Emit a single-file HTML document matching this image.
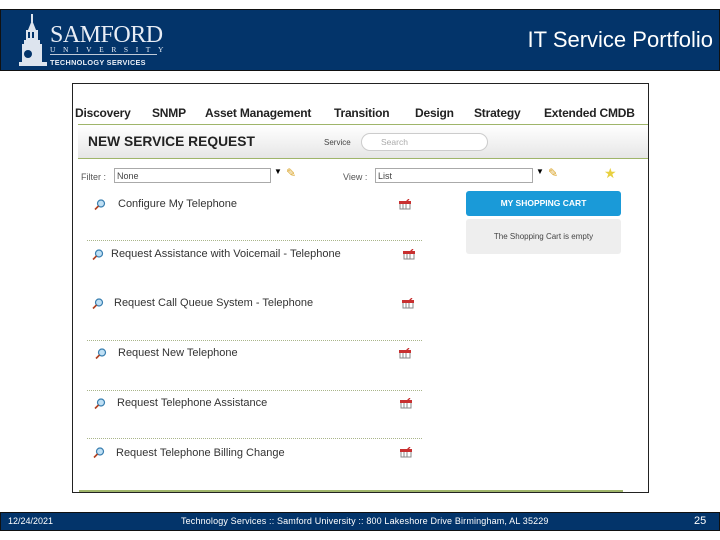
<!DOCTYPE html>
<html><head><meta charset="utf-8"><style>
*{margin:0;padding:0;box-sizing:border-box}
body{width:720px;height:540px;background:#fff;position:relative;overflow:hidden;font-family:"Liberation Sans",sans-serif}
.a{position:absolute}
.hdr{left:0;top:9px;width:720px;height:62px;background:#03346a;border:1px solid #111}
.ftr{left:0;top:512px;width:720px;height:19px;background:#03346a;border:1px solid #111;color:#fff;font-size:9px}
.frame{left:72px;top:83px;width:577px;height:410px;border:1px solid #222;background:#fff}
.nav{font-size:12px;font-weight:bold;color:#222;top:106px;letter-spacing:-0.2px}
.row{font-size:11px;color:#333;left:0}
.sep{left:87px;width:335px;border-top:1px dotted #a9b58a}
</style></head><body>
<div class="a hdr"></div>
<svg class="a" style="left:16px;top:14px" width="34" height="54" viewBox="0 0 34 54">
<g fill="#dde4ee"><rect x="15" y="0" width="2" height="8"/><polygon points="12,16 16,6 20,16"/><rect x="10" y="16" width="12" height="10"/><rect x="8" y="26" width="16" height="4"/><rect x="6" y="30" width="20" height="20"/><rect x="3" y="48" width="28" height="4"/></g>
<g fill="#03346a"><rect x="12" y="18" width="2" height="6"/><rect x="16" y="18" width="2" height="6"/><circle cx="12" cy="40" r="4"/></g></svg>
<div class="a" style="left:50px;top:23px;color:#e8edf5;font-family:'Liberation Serif',serif;font-size:24px;letter-spacing:-0.5px;line-height:24px">SAMFORD</div>
<div class="a" style="left:50px;top:45px;width:107px;color:#e8edf5;font-family:'Liberation Serif',serif;font-size:7.5px;letter-spacing:7.6px;line-height:9px;border-bottom:1px solid #c0cad8">UNIVERSITY</div>
<div class="a" style="left:50px;top:58px;color:#e8edf5;font-size:7.3px;letter-spacing:0.3px;font-weight:bold">TECHNOLOGY SERVICES</div>
<div class="a" style="right:7px;top:27px;color:#fff;font-size:22px">IT Service Portfolio</div>

<div class="a frame"></div>
<div class="a nav" style="left:75px">Discovery</div>
<div class="a nav" style="left:152px">SNMP</div>
<div class="a nav" style="left:205px">Asset Management</div>
<div class="a nav" style="left:334px">Transition</div>
<div class="a nav" style="left:415px">Design</div>
<div class="a nav" style="left:474px">Strategy</div>
<div class="a nav" style="left:544px">Extended CMDB</div>
<div class="a" style="left:78px;top:124px;width:570px;height:35px;border-top:1px solid #9fb56a;border-bottom:1px solid #9fb56a;background:linear-gradient(#fff,#e6e6e6)"></div>
<div class="a" style="left:88px;top:134px;font-size:13.8px;font-weight:bold;color:#222">NEW SERVICE REQUEST</div>
<div class="a" style="left:324px;top:138px;font-size:8px;color:#444">Service</div>
<div class="a" style="left:361px;top:133px;width:127px;height:18px;border:1px solid #ccc;border-radius:9px;background:#fff;font-size:8.5px;color:#aaa;padding:3px 0 0 19px">Search</div>

<div class="a" style="left:81px;top:172px;font-size:9px;color:#555">Filter :</div>
<div class="a" style="left:114px;top:168px;width:157px;height:15px;border:1px solid #aaa;font-size:9px;color:#444;padding:2px 2px">None</div>
<div class="a" style="left:274px;top:167px;font-size:8px">▼</div>
<div class="a" style="left:286px;top:166px;font-size:12px;color:#d8a020">✎</div>
<div class="a" style="left:343px;top:172px;font-size:9px;color:#555">View :</div>
<div class="a" style="left:375px;top:168px;width:158px;height:15px;border:1px solid #aaa;font-size:9px;color:#444;padding:2px 2px">List</div>
<div class="a" style="left:536px;top:167px;font-size:8px">▼</div>
<div class="a" style="left:548px;top:166px;font-size:12px;color:#d8a020">✎</div>
<div class="a" style="left:604px;top:165px;font-size:14px;color:#e8d040">★</div>

<div class="a" style="left:466px;top:191px;width:155px;height:25px;background:#1a9ad8;border-radius:3px;color:#fff;font-size:8.5px;font-weight:bold;text-align:center;line-height:25px">MY SHOPPING CART</div>
<div class="a" style="left:466px;top:219px;width:155px;height:35px;background:#eee;border-radius:3px;color:#444;font-size:8px;text-align:center;line-height:35px">The Shopping Cart is empty</div>

<div class="a sep" style="top:240px"></div>
<div class="a sep" style="top:340px"></div>
<div class="a sep" style="top:390px"></div>
<div class="a sep" style="top:438px"></div>

<svg width="0" height="0" style="position:absolute"><defs>
<g id="m"><circle cx="7" cy="4.5" r="3.5" fill="#bfe0f5" stroke="#3a7fb0" stroke-width="1.2"/><line x1="4.5" y1="7" x2="1" y2="10.5" stroke="#b04020" stroke-width="1.6"/></g>
<g id="b"><rect x="1" y="4" width="10" height="6" fill="none" stroke="#888" stroke-width="1"/><line x1="4" y1="4" x2="4" y2="10" stroke="#888"/><line x1="7" y1="4" x2="7" y2="10" stroke="#888"/><rect x="0" y="2" width="12" height="3" fill="#c83030"/><line x1="7" y1="3" x2="10" y2="0" stroke="#c83030" stroke-width="1.3"/></g>
</defs></svg>

<svg class="a" style="left:94px;top:199px" width="12" height="12"><use href="#m"/></svg>
<div class="a row" style="left:118px;top:198px">Configure My Telephone</div>
<svg class="a" style="left:399px;top:199px" width="12" height="11"><use href="#b"/></svg>

<svg class="a" style="left:92px;top:249px" width="12" height="12"><use href="#m"/></svg>
<div class="a row" style="left:111px;top:248px">Request Assistance with Voicemail - Telephone</div>
<svg class="a" style="left:403px;top:249px" width="12" height="11"><use href="#b"/></svg>

<svg class="a" style="left:92px;top:298px" width="12" height="12"><use href="#m"/></svg>
<div class="a row" style="left:114px;top:297px">Request Call Queue System - Telephone</div>
<svg class="a" style="left:402px;top:298px" width="12" height="11"><use href="#b"/></svg>

<svg class="a" style="left:95px;top:348px" width="12" height="12"><use href="#m"/></svg>
<div class="a row" style="left:118px;top:347px">Request New Telephone</div>
<svg class="a" style="left:399px;top:348px" width="12" height="11"><use href="#b"/></svg>

<svg class="a" style="left:94px;top:398px" width="12" height="12"><use href="#m"/></svg>
<div class="a row" style="left:117px;top:397px">Request Telephone Assistance</div>
<svg class="a" style="left:400px;top:398px" width="12" height="11"><use href="#b"/></svg>

<svg class="a" style="left:93px;top:447px" width="12" height="12"><use href="#m"/></svg>
<div class="a row" style="left:116px;top:447px">Request Telephone Billing Change</div>
<svg class="a" style="left:400px;top:447px" width="12" height="11"><use href="#b"/></svg>

<div class="a" style="left:79px;top:490px;width:544px;height:2px;background:#9fb56a"></div>

<div class="a ftr"></div>
<div class="a" style="left:8px;top:516px;color:#fff;font-size:9px">12/24/2021</div>
<div class="a" style="left:181px;top:516px;color:#fff;font-size:9px;letter-spacing:0.15px">Technology Services :: Samford University :: 800 Lakeshore Drive Birmingham, AL 35229</div>
<div class="a" style="left:694px;top:515px;color:#fff;font-size:11px">25</div>
</body></html>
